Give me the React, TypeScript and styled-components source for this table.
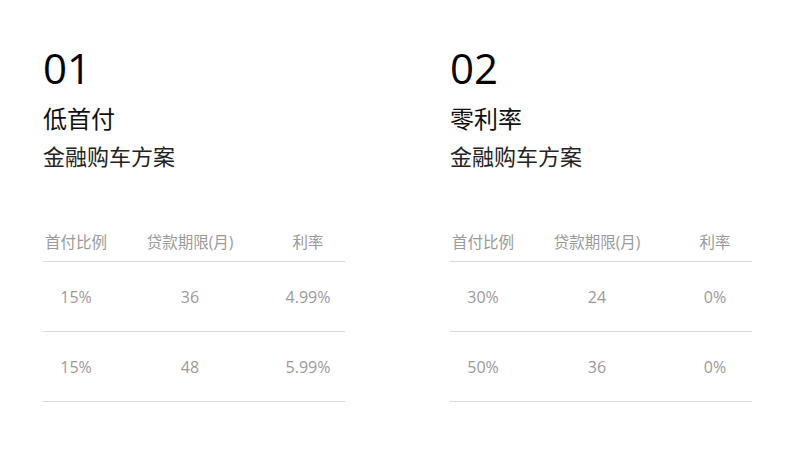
import React from "react";
import styled, { createGlobalStyle } from "styled-components";

const GlobalStyle = createGlobalStyle`
  html, body {
    margin: 0;
    padding: 0;
    background: #fff;
  }
  body {
    font-family: "Open Sans", "Noto Sans CJK SC", sans-serif;
    color: #111;
  }
`;

const Page = styled.div`
  display: flex;
  gap: 105px;
  padding: 38px 0 0 43px;
  width: 800px;
  height: 461px;
  box-sizing: border-box;
`;

const Plan = styled.section`
  width: 302px;
  display: flex;
  flex-direction: column;
`;

const Number = styled.div`
  font-size: 42px;
  line-height: 60px;
  color: #000;
`;

const Title = styled.h2`
  margin: 3px 0 0;
  font-weight: normal;
  font-size: 24px;
  line-height: 36px;
  color: #111;
`;

const Subtitle = styled.p`
  margin: 1px 0 0;
  font-size: 22px;
  line-height: 36px;
  color: #222;
`;

const Table = styled.table`
  margin-top: 47px;
  width: 100%;
  border-collapse: collapse;
  table-layout: fixed;
`;

const Head = styled.th<{ $w: number }>`
  width: ${(p) => p.$w}px;
  font-weight: normal;
  font-size: 15.5px;
  color: #9a9a9a;
  text-align: center;
  height: 40px;
  padding: 0;
  border-bottom: 1px solid #d9d9d9;
  white-space: nowrap;
`;

const Cell = styled.td`
  font-size: 16px;
  color: #9d9999;
  text-align: center;
  height: 69px;
  padding: 0;
  border-bottom: 1px solid #d9d9d9;
`;

type Row = [string, string, string];

interface PlanData {
  no: string;
  title: string;
  rows: Row[];
}

const plans: PlanData[] = [
  {
    no: "01",
    title: "低首付",
    rows: [
      ["15%", "36", "4.99%"],
      ["15%", "48", "5.99%"],
    ],
  },
  {
    no: "02",
    title: "零利率",
    rows: [
      ["30%", "24", "0%"],
      ["50%", "36", "0%"],
    ],
  },
];

const App: React.FC = () => (
  <>
    <GlobalStyle />
    <Page>
      {plans.map((plan) => (
        <Plan key={plan.no}>
          <Number>{plan.no}</Number>
          <Title>{plan.title}</Title>
          <Subtitle>金融购车方案</Subtitle>
          <Table>
            <thead>
              <tr>
                <Head $w={66}>首付比例</Head>
                <Head $w={162}>贷款期限(月)</Head>
                <Head $w={74}>利率</Head>
              </tr>
            </thead>
            <tbody>
              {plan.rows.map((row, i) => (
                <tr key={i}>
                  {row.map((v, j) => (
                    <Cell key={j}>{v}</Cell>
                  ))}
                </tr>
              ))}
            </tbody>
          </Table>
        </Plan>
      ))}
    </Page>
  </>
);

export default App;
